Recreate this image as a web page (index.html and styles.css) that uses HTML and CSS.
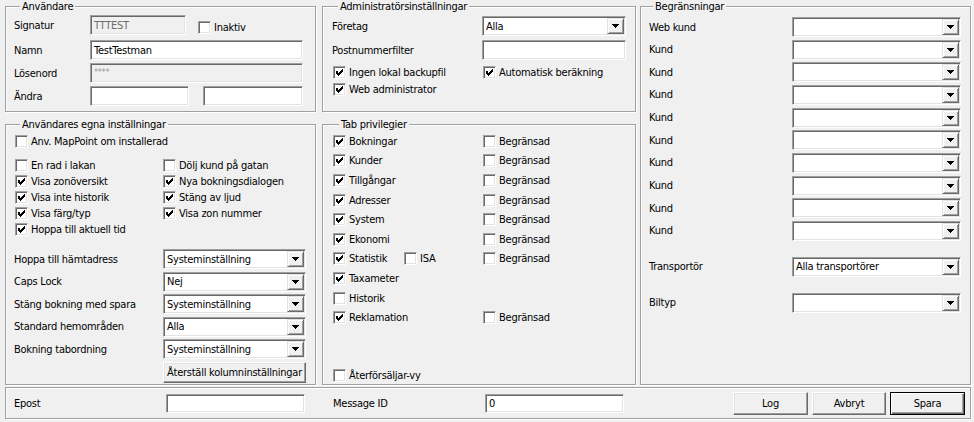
FILE: index.html
```html
<!DOCTYPE html>
<html lang="sv">
<head>
    <meta charset="UTF-8">
    <title>Användare</title>
    <link rel="stylesheet" href="styles.css">
</head>
<body>
    <svg class="defs" width="0" height="0" aria-hidden="true">
        <symbol id="chk" viewBox="0 0 7 7">
            <path d="M6 0h1v1h-1z M5 1h2v1h-2z M0 2h2v1h-2z M4 2h3v1h-3z M0 3h2v1h-2z M3 3h3v1h-3z M0 4h5v1h-5z M1 5h3v1h-3z M2 6h1v1h-1z"/>
        </symbol>
        <symbol id="arrow" viewBox="0 0 7 4">
            <path d="M0 0h7v1h-1v1h-1v1h-1v1h-1v-1h-1v-1h-1v-1h-1z"/>
        </symbol>
    </svg>

    <div class="window">
        <div class="top">
            <!-- left column -->
            <div class="col col-left">
                <div class="group g-small g-user">
                    <span class="legend">Användare</span>
                    <div class="fields">
                        <div class="urow urow-sig">
                            <span class="lbl w76">Signatur</span>
                            <div class="edit off w96">TTTEST</div>
                            <span class="cb cb-inaktiv"><span class="box"></span>Inaktiv</span>
                        </div>
                        <div class="urow">
                            <span class="lbl w76">Namn</span>
                            <div class="edit w213">TestTestman</div>
                        </div>
                        <div class="urow">
                            <span class="lbl w76">Lösenord</span>
                            <div class="edit off pw w213">****</div>
                        </div>
                        <div class="urow">
                            <span class="lbl w76">Ändra</span>
                            <div class="edit w99"></div>
                            <div class="edit w100 ml14"></div>
                        </div>
                    </div>
                </div>

                <div class="group g-tall g-own">
                    <span class="legend">Användares egna inställningar</span>
                    <div class="cbrow mappoint">
                        <span class="cb"><span class="box"></span>Anv. MapPoint om installerad</span>
                    </div>
                    <div class="cbgrid">
                        <span class="cb"><span class="box"></span>En rad i lakan</span>
                        <span class="cb"><span class="box"></span>Dölj kund på gatan</span>
                        <span class="cb"><span class="box"><svg><use href="#chk"/></svg></span>Visa zonöversikt</span>
                        <span class="cb"><span class="box"><svg><use href="#chk"/></svg></span>Nya bokningsdialogen</span>
                        <span class="cb"><span class="box"><svg><use href="#chk"/></svg></span>Visa inte historik</span>
                        <span class="cb"><span class="box"><svg><use href="#chk"/></svg></span>Stäng av ljud</span>
                        <span class="cb"><span class="box"><svg><use href="#chk"/></svg></span>Visa färg/typ</span>
                        <span class="cb"><span class="box"><svg><use href="#chk"/></svg></span>Visa zon nummer</span>
                        <span class="cb"><span class="box"><svg><use href="#chk"/></svg></span>Hoppa till aktuell tid</span>
                    </div>
                    <div class="own-combos">
                        <div class="crow">
                            <span class="lbl w149">Hoppa till hämtadress</span>
                            <div class="combo w143"><span class="val">Systeminställning</span><span class="btn"><svg><use href="#arrow"/></svg></span></div>
                        </div>
                        <div class="crow">
                            <span class="lbl w149">Caps Lock</span>
                            <div class="combo w143"><span class="val">Nej</span><span class="btn"><svg><use href="#arrow"/></svg></span></div>
                        </div>
                        <div class="crow">
                            <span class="lbl w149">Stäng bokning med spara</span>
                            <div class="combo w143"><span class="val">Systeminställning</span><span class="btn"><svg><use href="#arrow"/></svg></span></div>
                        </div>
                        <div class="crow">
                            <span class="lbl w149">Standard hemområden</span>
                            <div class="combo w143"><span class="val">Alla</span><span class="btn"><svg><use href="#arrow"/></svg></span></div>
                        </div>
                        <div class="crow">
                            <span class="lbl w149">Bokning tabordning</span>
                            <div class="combo w143"><span class="val">Systeminställning</span><span class="btn"><svg><use href="#arrow"/></svg></span></div>
                        </div>
                        <div class="crow">
                            <span class="lbl w149"></span>
                            <button class="button reset">Återställ kolumninställningar</button>
                        </div>
                    </div>
                </div>
            </div>

            <!-- middle column -->
            <div class="col col-mid">
                <div class="group g-small g-admin">
                    <span class="legend">Administratörsinställningar</span>
                    <div class="crow admin-first">
                        <span class="lbl w150">Företag</span>
                        <div class="combo w144"><span class="val">Alla</span><span class="btn"><svg><use href="#arrow"/></svg></span></div>
                    </div>
                    <div class="crow admin-post">
                        <span class="lbl w150">Postnummerfilter</span>
                        <div class="edit w144"></div>
                    </div>
                    <div class="admin-cbs">
                        <div class="cbrow">
                            <span class="cb w150"><span class="box"><svg><use href="#chk"/></svg></span>Ingen lokal backupfil</span>
                            <span class="cb"><span class="box"><svg><use href="#chk"/></svg></span>Automatisk beräkning</span>
                        </div>
                        <div class="cbrow">
                            <span class="cb"><span class="box"><svg><use href="#chk"/></svg></span>Web administrator</span>
                        </div>
                    </div>
                </div>

                <div class="group g-tall g-tabs">
                    <span class="legend">Tab privilegier</span>
                    <div class="priv">
                        <div class="prow">
                            <span class="cb w150"><span class="box"><svg><use href="#chk"/></svg></span>Bokningar</span>
                            <span class="cb"><span class="box"></span>Begränsad</span>
                        </div>
                        <div class="prow">
                            <span class="cb w150"><span class="box"><svg><use href="#chk"/></svg></span>Kunder</span>
                            <span class="cb"><span class="box"></span>Begränsad</span>
                        </div>
                        <div class="prow">
                            <span class="cb w150"><span class="box"><svg><use href="#chk"/></svg></span>Tillgångar</span>
                            <span class="cb"><span class="box"></span>Begränsad</span>
                        </div>
                        <div class="prow">
                            <span class="cb w150"><span class="box"><svg><use href="#chk"/></svg></span>Adresser</span>
                            <span class="cb"><span class="box"></span>Begränsad</span>
                        </div>
                        <div class="prow">
                            <span class="cb w150"><span class="box"><svg><use href="#chk"/></svg></span>System</span>
                            <span class="cb"><span class="box"></span>Begränsad</span>
                        </div>
                        <div class="prow">
                            <span class="cb w150"><span class="box"><svg><use href="#chk"/></svg></span>Ekonomi</span>
                            <span class="cb"><span class="box"></span>Begränsad</span>
                        </div>
                        <div class="prow">
                            <span class="cb w71"><span class="box"><svg><use href="#chk"/></svg></span>Statistik</span>
                            <span class="cb w79"><span class="box"></span>ISA</span>
                            <span class="cb"><span class="box"></span>Begränsad</span>
                        </div>
                        <div class="prow">
                            <span class="cb"><span class="box"><svg><use href="#chk"/></svg></span>Taxameter</span>
                        </div>
                        <div class="prow">
                            <span class="cb"><span class="box"></span>Historik</span>
                        </div>
                        <div class="prow">
                            <span class="cb w150"><span class="box"><svg><use href="#chk"/></svg></span>Reklamation</span>
                            <span class="cb"><span class="box"></span>Begränsad</span>
                        </div>
                    </div>
                    <div class="prow reseller">
                        <span class="cb"><span class="box"></span>Återförsäljar-vy</span>
                    </div>
                </div>
            </div>

            <!-- right column -->
            <div class="group g-limits">
                <span class="legend">Begränsningar</span>
                <div class="limits">
                    <div class="crow"><span class="lbl w143">Web kund</span><div class="combo w169"><span class="val"></span><span class="btn"><svg><use href="#arrow"/></svg></span></div></div>
                    <div class="crow"><span class="lbl w143">Kund</span><div class="combo w169"><span class="val"></span><span class="btn"><svg><use href="#arrow"/></svg></span></div></div>
                    <div class="crow"><span class="lbl w143">Kund</span><div class="combo w169"><span class="val"></span><span class="btn"><svg><use href="#arrow"/></svg></span></div></div>
                    <div class="crow"><span class="lbl w143">Kund</span><div class="combo w169"><span class="val"></span><span class="btn"><svg><use href="#arrow"/></svg></span></div></div>
                    <div class="crow"><span class="lbl w143">Kund</span><div class="combo w169"><span class="val"></span><span class="btn"><svg><use href="#arrow"/></svg></span></div></div>
                    <div class="crow"><span class="lbl w143">Kund</span><div class="combo w169"><span class="val"></span><span class="btn"><svg><use href="#arrow"/></svg></span></div></div>
                    <div class="crow"><span class="lbl w143">Kund</span><div class="combo w169"><span class="val"></span><span class="btn"><svg><use href="#arrow"/></svg></span></div></div>
                    <div class="crow"><span class="lbl w143">Kund</span><div class="combo w169"><span class="val"></span><span class="btn"><svg><use href="#arrow"/></svg></span></div></div>
                    <div class="crow"><span class="lbl w143">Kund</span><div class="combo w169"><span class="val"></span><span class="btn"><svg><use href="#arrow"/></svg></span></div></div>
                    <div class="crow"><span class="lbl w143">Kund</span><div class="combo w169"><span class="val"></span><span class="btn"><svg><use href="#arrow"/></svg></span></div></div>
                </div>
                <div class="crow spaced"><span class="lbl w143">Transportör</span><div class="combo w169"><span class="val">Alla transportörer</span><span class="btn"><svg><use href="#arrow"/></svg></span></div></div>
                <div class="crow spaced"><span class="lbl w143">Biltyp</span><div class="combo w169"><span class="val"></span><span class="btn"><svg><use href="#arrow"/></svg></span></div></div>
            </div>
        </div>

        <!-- bottom bar -->
        <div class="group g-bottom">
            <span class="lbl w152">Epost</span>
            <div class="edit w139 h19"></div>
            <span class="lbl w152 ml28">Message ID</span>
            <div class="edit w139 h19">0</div>
            <div class="actions">
                <button class="button w75">Log</button>
                <button class="button w74">Avbryt</button>
                <button class="button default w75">Spara</button>
            </div>
        </div>
    </div>
</body>
</html>
```

FILE: styles.css
```css
* {
    margin: 0;
    padding: 0;
    box-sizing: border-box;
}

body {
    width: 974px;
    height: 422px;
    overflow: hidden;
    background: #f0f0f0;
    color: #000;
    font-family: "DejaVu Sans Condensed", "Liberation Sans", Arial, sans-serif;
    font-stretch: condensed;
    font-size: 11px;
    line-height: 13px;
    letter-spacing: -0.25px;
}

.defs {
    position: absolute;
}

.window {
    padding: 6px 0 0 5px;
}

.top {
    display: flex;
    align-items: flex-start;
}

.col {
    display: flex;
    flex-direction: column;
    gap: 12px;
}

.col-left { width: 311px; }
.col-mid { width: 314px; margin-left: 6px; }

/* etched group box */
.group {
    display: flex;
    flex-direction: column;
    border: 1px solid #a0a0a0;
    box-shadow: inset 1px 1px #fff, 1px 1px #fff;
}

.legend {
    align-self: flex-start;
    height: 13px;
    margin: -7px 0 0 6px;
    padding: 0 2px;
    background: #f0f0f0;
    white-space: nowrap;
}

.g-small { height: 106px; }
.g-tall { height: 261px; }

/* generic pieces */
.lbl {
    flex: none;
    white-space: nowrap;
}

.w71 { width: 71px; }
.w74 { width: 74px; }
.w75 { width: 75px; }
.w76 { width: 76px; }
.w79 { width: 79px; }
.w96 { width: 96px; }
.w99 { width: 99px; }
.w100 { width: 100px; }
.w139 { width: 139px; }
.w143 { width: 143px; }
.w144 { width: 144px; }
.w149 { width: 149px; }
.w150 { width: 150px; }
.w152 { width: 152px; }
.w169 { width: 169px; }
.w213 { width: 213px; }
.ml14 { margin-left: 14px; }
.ml28 { margin-left: 28px; }
.h19 { height: 19px !important; }

.edit {
    flex: none;
    height: 20px;
    display: flex;
    align-items: center;
    padding: 0 3px;
    background: #fff;
    border: 1px solid;
    border-color: #a0a0a0 #fff #fff #a0a0a0;
    box-shadow: inset 1px 1px #696969, inset -1px -1px #e3e3e3;
    white-space: nowrap;
    overflow: hidden;
}

.edit.off {
    background: #f0f0f0;
    color: #6d6d6d;
}

.edit.pw {
    color: #9a9a9a;
    font-size: 9px;
    align-items: flex-start;
    padding-top: 2px;
}

.combo {
    flex: none;
    height: 20px;
    display: flex;
    padding: 1px;
    background: #fff;
    border: 1px solid;
    border-color: #a0a0a0 #fff #fff #a0a0a0;
    box-shadow: inset 1px 1px #696969, inset -1px -1px #e3e3e3;
}

.combo .val {
    flex: 1;
    display: flex;
    align-items: center;
    padding-left: 2px;
    white-space: nowrap;
}

.combo .btn {
    width: 17px;
    display: flex;
    align-items: center;
    justify-content: center;
    background: #f0f0f0;
    border: 1px solid;
    border-color: #e3e3e3 #696969 #696969 #e3e3e3;
    box-shadow: inset 1px 1px #fff, inset -1px -1px #a0a0a0;
}

.combo .btn svg {
    width: 7px;
    height: 4px;
    shape-rendering: crispEdges;
}

.cb {
    display: flex;
    align-items: center;
    gap: 3px;
    white-space: nowrap;
    flex: none;
}

.box {
    flex: none;
    width: 13px;
    height: 13px;
    padding: 2px;
    background: #fff;
    border: 1px solid;
    border-color: #a0a0a0 #fff #fff #a0a0a0;
    box-shadow: inset 1px 1px #696969, inset -1px -1px #e3e3e3;
}

.box svg {
    display: block;
    width: 7px;
    height: 7px;
    shape-rendering: crispEdges;
}

.button {
    height: 23px;
    font: inherit;
    letter-spacing: inherit;
    color: #000;
    white-space: nowrap;
    background: #f0f0f0;
    border: 1px solid;
    border-color: #fff #696969 #696969 #fff;
    box-shadow: inset -1px -1px #a0a0a0, inset 1px 1px #e3e3e3;
}

.button.default {
    border-color: #000;
    box-shadow: inset 1px 1px #fff, inset -1px -1px #696969, inset -2px -2px #a0a0a0;
}

.crow {
    display: flex;
    align-items: center;
    height: 20px;
}

.cbrow {
    display: flex;
    align-items: center;
}

/* Användare */
.g-user { padding-left: 8px; }

.g-user .fields {
    display: flex;
    flex-direction: column;
    gap: 3px;
    margin-top: 2px;
}

.urow {
    display: flex;
    align-items: center;
    height: 20px;
}

.urow-sig { margin-bottom: 2px; }

.cb-inaktiv {
    margin: 4px 0 0 12px;
}

/* Administratörsinställningar */
.g-admin { padding-left: 9px; }
.admin-first { margin-top: 3px; }
.admin-post { margin-top: 4px; }

.admin-cbs {
    margin: 4px 0 0 1px;
}

.admin-cbs .cbrow { height: 17px; }

/* Användares egna inställningar */
.g-own { padding-left: 8px; }

.mappoint {
    height: 16px;
    margin: 2px 0 0 1px;
}

.cbgrid {
    display: grid;
    grid-template-columns: 148px auto;
    grid-auto-rows: 16px;
    align-items: center;
    margin: 8px 0 0 1px;
}

.own-combos {
    display: flex;
    flex-direction: column;
    gap: 2.6px;
    margin-top: 12px;
}

.button.reset {
    width: 143px;
    height: 21px;
    margin-top: 1px;
    padding: 0;
}

/* Tab privilegier */
.g-tabs { padding-left: 10px; }

.priv {
    margin-top: 0.6px;
}

.prow {
    display: flex;
    align-items: center;
    height: 19.6px;
}

.reseller { margin-top: 38.6px; }

/* Begränsningar */
.g-limits {
    width: 331px;
    height: 379px;
    margin-left: 4px;
    padding-left: 8px;
}

.g-limits .legend { margin-left: 4px; }

.limits {
    display: flex;
    flex-direction: column;
    gap: 2.67px;
    margin-top: 4px;
}

.crow.spaced { margin-top: 16px; }

/* bottom bar */
.g-bottom {
    width: 966px;
    height: 32px;
    margin-top: 2px;
    flex-direction: row;
    align-items: center;
    padding: 0 5px 0 8px;
}

.actions {
    display: flex;
    gap: 4px;
    margin-left: auto;
}
```
